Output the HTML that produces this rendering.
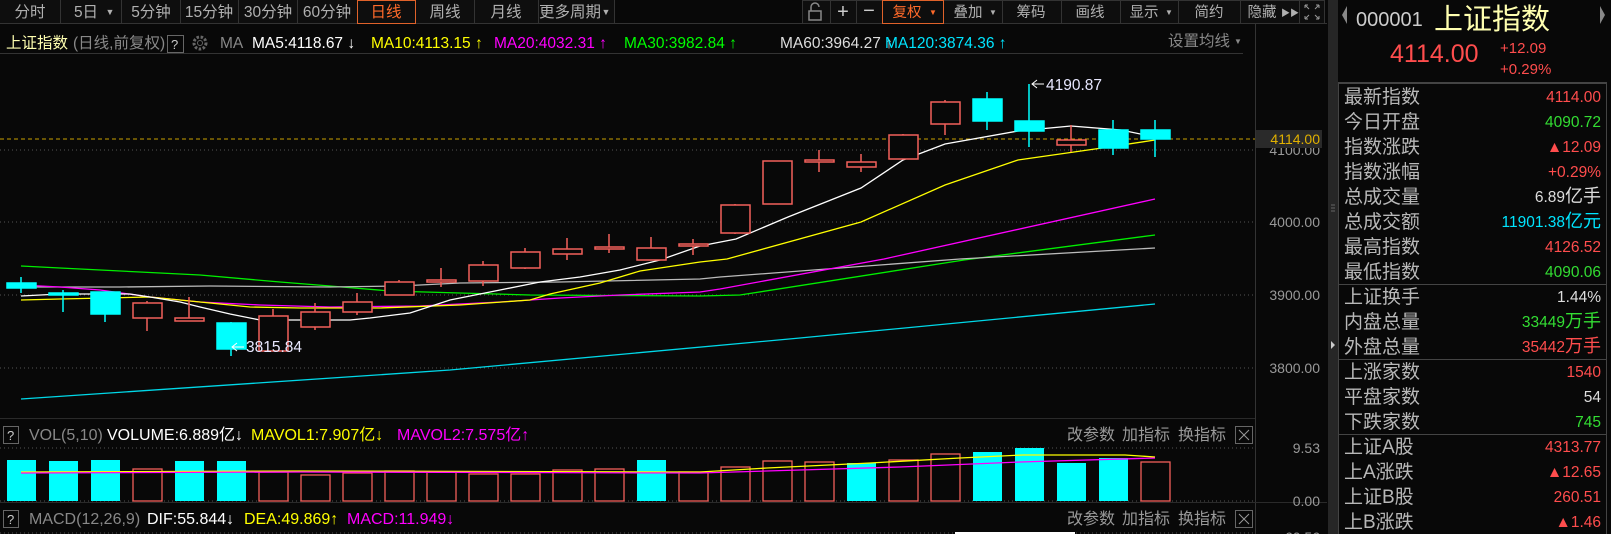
<!DOCTYPE html>
<html><head><meta charset="utf-8"><style>
html,body{margin:0;padding:0;background:#080808;width:1611px;height:534px;overflow:hidden}
svg{display:block}
text{font-family:"Liberation Sans","Noto Sans CJK SC",sans-serif}
</style></head><body>
<svg width="1611" height="534" viewBox="0 0 1611 534" xmlns="http://www.w3.org/2000/svg">
<rect width="1611" height="534" fill="#080808"/>
<g font-size="15.5" fill="#b0b0b0" text-anchor="middle">
<rect x="0" y="0" width="615" height="23" fill="#0e0e0e"/>
<g stroke="#333" stroke-width="1">
<line x1="60.5" y1="0" x2="60.5" y2="23"/><line x1="121.5" y1="0" x2="121.5" y2="23"/><line x1="180.5" y1="0" x2="180.5" y2="23"/><line x1="238.5" y1="0" x2="238.5" y2="23"/><line x1="297.5" y1="0" x2="297.5" y2="23"/><line x1="415.5" y1="0" x2="415.5" y2="23"/><line x1="474.5" y1="0" x2="474.5" y2="23"/><line x1="538.5" y1="0" x2="538.5" y2="23"/><line x1="614.5" y1="0" x2="614.5" y2="23"/>
<line x1="0" y1="23.5" x2="1327" y2="23.5"/>
</g>
<rect x="357.5" y="0.5" width="58" height="23" fill="none" stroke="#e0622a"/>
<text x="30" y="17">分时</text><text x="86" y="17">5日</text><text x="110" y="15" font-size="9">▼</text>
<text x="151" y="17">5分钟</text><text x="209" y="17">15分钟</text><text x="268" y="17">30分钟</text><text x="327" y="17">60分钟</text>
<text x="386" y="17" fill="#ff6a2a">日线</text><text x="445" y="17">周线</text><text x="506" y="17">月线</text><text x="570" y="17">更多周期</text><text x="606" y="15" font-size="9">▼</text>
</g>
<g font-size="14.5" fill="#b0b0b0" text-anchor="middle">
<rect x="802.5" y="0.5" width="522" height="23" fill="#0e0e0e" stroke="#333"/>
<g stroke="#333"><line x1="830.5" y1="0" x2="830.5" y2="23"/><line x1="856.5" y1="0" x2="856.5" y2="23"/><line x1="1002.5" y1="0" x2="1002.5" y2="23"/><line x1="1061.5" y1="0" x2="1061.5" y2="23"/><line x1="1120.5" y1="0" x2="1120.5" y2="23"/><line x1="1178.5" y1="0" x2="1178.5" y2="23"/><line x1="1240.5" y1="0" x2="1240.5" y2="23"/><line x1="1299.5" y1="0" x2="1299.5" y2="23"/></g>
<rect x="882.5" y="0.5" width="61" height="23" fill="none" stroke="#e0622a"/>
<path d="M811 11 v-4 a4 4 0 0 1 8 0 M809 11 h12 v9 h-12z" fill="none" stroke="#888" stroke-width="1.5"/>
<text x="843" y="18" font-size="20" fill="#ccc">+</text><text x="869" y="17" font-size="20" fill="#ccc">−</text>
<text x="907" y="17" fill="#ff6a2a">复权</text><text x="933" y="15" font-size="8" fill="#ff6a2a">▼</text>
<text x="968" y="17">叠加</text><text x="993" y="15" font-size="8">▼</text>
<text x="1031" y="17">筹码</text><text x="1090" y="17">画线</text><text x="1144" y="17">显示</text><text x="1169" y="15" font-size="8">▼</text>
<text x="1209" y="17">简约</text><text x="1262" y="17">隐藏</text><text x="1290" y="16" font-size="9">▶▶</text>
<path d="M1305 5 l4 4 M1305 5 h3 M1305 5 v3 M1319 5 l-4 4 M1319 5 h-3 M1319 5 v3 M1305 19 l4 -4 M1305 19 h3 M1305 19 v-3 M1319 19 l-4 -4 M1319 19 h-3 M1319 19 v-3" stroke="#999" fill="none"/>
</g>
<g font-size="15.5">
<text x="6" y="48" fill="#ffffb0">上证指数</text>
<text x="73" y="48" fill="#888">(日线,前复权)</text>
<rect x="167.5" y="35.5" width="16" height="17" fill="none" stroke="#666"/><text x="171" y="49" fill="#ccc" font-size="13">?</text>
<circle cx="200" cy="43" r="6" fill="none" stroke="#666" stroke-width="3" stroke-dasharray="2.5 1.6"/><circle cx="200" cy="43" r="2.5" fill="none" stroke="#666"/>
<text x="220" y="48" fill="#888">MA</text>
<text x="252" y="48" fill="#fff">MA5:4118.67 ↓</text>
<text x="371" y="48" fill="#ffff00">MA10:4113.15 ↑</text>
<text x="494" y="48" fill="#ff00ff">MA20:4032.31 ↑</text>
<text x="624" y="48" fill="#00ff00">MA30:3982.84 ↑</text>
<text x="780" y="48" fill="#ddd">MA60:3964.27 ↑</text>
<text x="885" y="48" fill="#00e5ff">MA120:3874.36 ↑</text>
<text x="1168" y="46" fill="#888">设置均线</text><text x="1234" y="44" font-size="8" fill="#888">▼</text>
<line x1="0" y1="53.5" x2="1243" y2="53.5" stroke="#333"/>
</g>
<g stroke="#555" stroke-dasharray="1 3">
<line x1="0" y1="150" x2="1255" y2="150"/><line x1="0" y1="222" x2="1255" y2="222"/><line x1="0" y1="295" x2="1255" y2="295"/><line x1="0" y1="368" x2="1255" y2="368"/>
<line x1="0" y1="448" x2="1255" y2="448"/><line x1="0" y1="501" x2="1255" y2="501"/><line x1="0" y1="533" x2="1255" y2="533"/>
</g>
<line x1="1255.5" y1="24" x2="1255.5" y2="534" stroke="#333"/>
<line x1="0" y1="418.5" x2="1255" y2="418.5" stroke="#2a2a2a"/>
<line x1="0" y1="502.5" x2="1327" y2="502.5" stroke="#2a2a2a"/>
<g font-size="14" fill="#999" text-anchor="end">
<text x="1320" y="155">4100.00</text><text x="1320" y="227">4000.00</text><text x="1320" y="300">3900.00</text><text x="1320" y="373">3800.00</text>
<text x="1320" y="453">9.53</text><text x="1320" y="506">0.00</text><text x="1320" y="542">60.56</text>
</g>
<line x1="0" y1="139" x2="1255" y2="139" stroke="#c8a000" stroke-dasharray="4 3"/>
<rect x="1256" y="130" width="66" height="18" fill="#2a2a2a"/>
<text x="1320" y="144" font-size="14" fill="#e0b000" text-anchor="end">4114.00</text>
<g fill="none" stroke-width="1.3">
<polyline stroke="#00d8e8" points="21,399 450,370 800,338 1155,304"/>
<polyline stroke="#00ee00" points="21,266 60,268 140,272 200,275 280,282 330,286 390,291 460,293 530,295 700,296 740,295 964,260 1155,235"/>
<polyline stroke="#bbb" points="21,287 120,287 210,286 330,287 400,286 460,283 560,282 700,279 720,277 960,259 1155,248"/>
<polyline stroke="#ff00ff" points="21,285 60,287 100,290 150,297 200,302 260,305 330,307 420,306 500,302 560,298 620,295 700,292 720,289 884,259 1155,199"/>
<polyline stroke="#ffff00" points="21,300 60,299 150,297 250,307 300,308 380,308 460,305 530,300 550,294 600,283 640,271 700,262 727,259 861,222 945,185 1018,160 1102,148 1155,140"/>
<polyline stroke="#fff" points="21,296 60,294 130,294 150,297 180,302 200,307 230,314 260,320 350,320 370,318 410,313 450,300 500,290 540,282 580,277 620,270 660,260 700,246 736,239 788,217 861,188 903,160 945,144 1018,131 1071,126 1121,130 1155,137"/>
</g>
<g stroke-width="1.5">
<g stroke="#00ffff" fill="#00ffff">
<line x1="21" y1="277" x2="21" y2="293"/><rect x="7" y="283" width="29" height="5"/>
<line x1="63" y1="290" x2="63" y2="312"/><rect x="49" y="293" width="29" height="2"/>
<line x1="105" y1="292" x2="105" y2="322"/><rect x="91" y="292" width="29" height="22"/>
<line x1="231" y1="322" x2="231" y2="356"/><rect x="217" y="323" width="29" height="26"/>
<line x1="987" y1="92" x2="987" y2="130"/><rect x="973" y="99" width="29" height="22"/>
<line x1="1029" y1="84" x2="1029" y2="147"/><rect x="1015" y="121" width="29" height="10"/>
<line x1="1113" y1="120" x2="1113" y2="155"/><rect x="1099" y="130" width="29" height="18"/>
<line x1="1155" y1="120" x2="1155" y2="157"/><rect x="1141" y="130" width="29" height="9"/>
</g>
<g stroke="#f2605a" fill="#080808">
<line x1="147" y1="301" x2="147" y2="331"/><rect x="133" y="303" width="29" height="15"/>
<line x1="189" y1="297" x2="189" y2="321"/><rect x="175" y="318" width="29" height="3"/>
<line x1="273" y1="309" x2="273" y2="351"/><rect x="259" y="316" width="29" height="35"/>
<line x1="315" y1="303" x2="315" y2="330"/><rect x="301" y="312" width="29" height="15"/>
<line x1="357" y1="293" x2="357" y2="315"/><rect x="343" y="302" width="29" height="10"/>
<line x1="399" y1="280" x2="399" y2="295"/><rect x="385" y="282" width="29" height="13"/>
<line x1="441" y1="268" x2="441" y2="287"/><rect x="427" y="280" width="29" height="2"/>
<line x1="483" y1="261" x2="483" y2="286"/><rect x="469" y="265" width="29" height="16"/>
<line x1="525" y1="248" x2="525" y2="269"/><rect x="511" y="252" width="29" height="16"/>
<line x1="567" y1="238" x2="567" y2="260"/><rect x="553" y="249" width="29" height="5"/>
<line x1="609" y1="234" x2="609" y2="253"/><rect x="595" y="247" width="29" height="2"/>
<line x1="651" y1="237" x2="651" y2="260"/><rect x="637" y="248" width="29" height="12"/>
<line x1="693" y1="239" x2="693" y2="255"/><rect x="679" y="244" width="29" height="2"/>
<line x1="735" y1="204" x2="735" y2="234"/><rect x="721" y="205" width="29" height="28"/>
<line x1="777" y1="161" x2="777" y2="204"/><rect x="763" y="161" width="29" height="43"/>
<line x1="819" y1="150" x2="819" y2="172"/><rect x="805" y="160" width="29" height="2"/>
<line x1="861" y1="154" x2="861" y2="172"/><rect x="847" y="162" width="29" height="5"/>
<line x1="903" y1="134" x2="903" y2="159"/><rect x="889" y="135" width="29" height="24"/>
<line x1="945" y1="100" x2="945" y2="135"/><rect x="931" y="102" width="29" height="22"/>
<line x1="1071" y1="125" x2="1071" y2="152"/><rect x="1057" y="140" width="29" height="5"/>
</g>
</g>
<g font-size="15.5" fill="#e8e8ff">
<text x="1046" y="90">4190.87</text><path d="M1044 84 h-12 m5 -4 l-5 4 l5 4" stroke="#fff" fill="none"/>
<text x="246" y="352">3815.84</text><path d="M244 347 h-12 m5 -4 l-5 4 l5 4" stroke="#fff" fill="none"/>
</g>
<g font-size="16">
<rect x="3.5" y="426.5" width="15" height="17" fill="none" stroke="#666"/><text x="7" y="440" fill="#ccc" font-size="13">?</text>
<text x="29" y="440" fill="#888">VOL(5,10)</text>
<text x="107" y="440" fill="#fff">VOLUME:6.889亿↓</text>
<text x="251" y="440" fill="#ffff00">MAVOL1:7.907亿↓</text>
<text x="397" y="440" fill="#ff00ff">MAVOL2:7.575亿↑</text>
<text x="1067" y="440" fill="#999">改参数</text><text x="1122" y="440" fill="#999">加指标</text><text x="1178" y="440" fill="#999">换指标</text>
<rect x="1235.5" y="426.5" width="17" height="17" fill="none" stroke="#666"/><path d="M1239 430 l10 10 M1249 430 l-10 10" stroke="#999"/>
<rect x="3.5" y="510.5" width="15" height="17" fill="none" stroke="#666"/><text x="7" y="524" fill="#ccc" font-size="13">?</text>
<text x="29" y="524" fill="#888">MACD(12,26,9)</text>
<text x="147" y="524" fill="#fff">DIF:55.844↓</text>
<text x="244" y="524" fill="#ffff00">DEA:49.869↑</text>
<text x="347" y="524" fill="#ff00ff">MACD:11.949↓</text>
<text x="1067" y="524" fill="#999">改参数</text><text x="1122" y="524" fill="#999">加指标</text><text x="1178" y="524" fill="#999">换指标</text>
<rect x="1235.5" y="510.5" width="17" height="17" fill="none" stroke="#666"/><path d="M1239 514 l10 10 M1249 514 l-10 10" stroke="#999"/>
</g>
<g fill="#00ffff">
<rect x="7" y="460" width="29" height="41"/><rect x="49" y="461" width="29" height="40"/><rect x="91" y="460" width="29" height="41"/>
<rect x="175" y="461" width="29" height="40"/><rect x="217" y="461" width="29" height="40"/><rect x="637" y="460" width="29" height="41"/>
<rect x="847" y="463" width="29" height="38"/><rect x="973" y="452" width="29" height="49"/><rect x="1015" y="448" width="29" height="53"/>
<rect x="1057" y="463" width="29" height="38"/><rect x="1099" y="458" width="29" height="43"/>
</g>
<g fill="none" stroke="#f2605a" stroke-width="1.3">
<rect x="133" y="469" width="29" height="32"/><rect x="259" y="472" width="29" height="29"/><rect x="301" y="475" width="29" height="26"/>
<rect x="343" y="473" width="29" height="28"/><rect x="385" y="471" width="29" height="30"/><rect x="427" y="472" width="29" height="29"/>
<rect x="469" y="474" width="29" height="27"/><rect x="511" y="474" width="29" height="27"/><rect x="553" y="470" width="29" height="31"/>
<rect x="595" y="469" width="29" height="32"/><rect x="679" y="472" width="29" height="29"/><rect x="721" y="467" width="29" height="34"/>
<rect x="763" y="461" width="29" height="40"/><rect x="805" y="462" width="29" height="39"/><rect x="889" y="460" width="29" height="41"/>
<rect x="931" y="454" width="29" height="47"/><rect x="1141" y="462" width="29" height="39"/>
</g>
<polyline fill="none" stroke="#ffff00" stroke-width="1.3" points="21,472 300,471 700,472 767,468 870,463 960,458 1023,455 1125,455 1155,457"/>
<polyline fill="none" stroke="#ff00ff" stroke-width="1.3" points="21,473 300,472 700,473 800,470 900,467 1020,462 1155,458"/>
<rect x="955" y="532" width="120" height="2" fill="#fff"/>
<rect x="1328" y="0" width="10" height="534" fill="#262626"/>
<path d="M1331 341 l4 4 l-4 4z" fill="#ccc"/>
<g stroke="#666"><line x1="1331" y1="205" x2="1335" y2="205"/><line x1="1331" y1="208" x2="1335" y2="208"/><line x1="1331" y1="211" x2="1335" y2="211"/></g>
<path d="M1342 15 l5 -9 v18z" fill="#888"/><path d="M1600 6 l5 9 l-5 9z" fill="#888"/>
<text x="1356" y="26" font-size="20" fill="#ccc">000001</text>
<text x="1434" y="29" font-size="29" fill="#ffffb0">上证指数</text>
<text x="1390" y="62" font-size="25" fill="#ff4d4d">4114.00</text>
<text x="1500" y="53" font-size="15" fill="#ff4d4d">+12.09</text>
<text x="1500" y="74" font-size="15" fill="#ff4d4d">+0.29%</text>
<line x1="1338" y1="82.5" x2="1607" y2="82.5" stroke="#444"/>
<g stroke="#444" fill="none"><rect x="1338.5" y="83.5" width="268" height="452"/>
<line x1="1338" y1="284.5" x2="1607" y2="284.5"/><line x1="1338" y1="359.5" x2="1607" y2="359.5"/><line x1="1338" y1="434.5" x2="1607" y2="434.5"/></g>
<g font-size="19" fill="#b8b8b8">
<text x="1344" y="103">最新指数</text><text x="1344" y="128">今日开盘</text><text x="1344" y="153">指数涨跌</text><text x="1344" y="178">指数涨幅</text>
<text x="1344" y="203">总成交量</text><text x="1344" y="228">总成交额</text><text x="1344" y="253">最高指数</text><text x="1344" y="278">最低指数</text>
<text x="1344" y="303">上证换手</text><text x="1344" y="328">内盘总量</text><text x="1344" y="353">外盘总量</text>
<text x="1344" y="378">上涨家数</text><text x="1344" y="403">平盘家数</text><text x="1344" y="428">下跌家数</text>
<text x="1344" y="453">上证A股</text><text x="1344" y="478">上A涨跌</text><text x="1344" y="503">上证B股</text><text x="1344" y="528">上B涨跌</text>
</g>
<g font-size="15.5" text-anchor="end">
<text x="1601" y="102" fill="#ff4d4d">4114.00</text>
<text x="1601" y="127" fill="#33dd33">4090.72</text>
<text x="1601" y="152" fill="#ff4d4d">▲12.09</text>
<text x="1601" y="177" fill="#ff4d4d">+0.29%</text>
<text x="1601" y="202" fill="#ddd">6.89<tspan font-size="18">亿手</tspan></text>
<text x="1601" y="227" fill="#00e5ff">11901.38<tspan font-size="18">亿元</tspan></text>
<text x="1601" y="252" fill="#ff4d4d">4126.52</text>
<text x="1601" y="277" fill="#33dd33">4090.06</text>
<text x="1601" y="302" fill="#ddd">1.44%</text>
<text x="1601" y="327" fill="#33dd33">33449<tspan font-size="18">万手</tspan></text>
<text x="1601" y="352" fill="#ff4d4d">35442<tspan font-size="18">万手</tspan></text>
<text x="1601" y="377" fill="#ff4d4d">1540</text>
<text x="1601" y="402" fill="#ddd">54</text>
<text x="1601" y="427" fill="#33dd33">745</text>
<text x="1601" y="452" fill="#ff4d4d">4313.77</text>
<text x="1601" y="477" fill="#ff4d4d">▲12.65</text>
<text x="1601" y="502" fill="#ff4d4d">260.51</text>
<text x="1601" y="527" fill="#ff4d4d">▲1.46</text>
</g>
</svg>
</body></html>
